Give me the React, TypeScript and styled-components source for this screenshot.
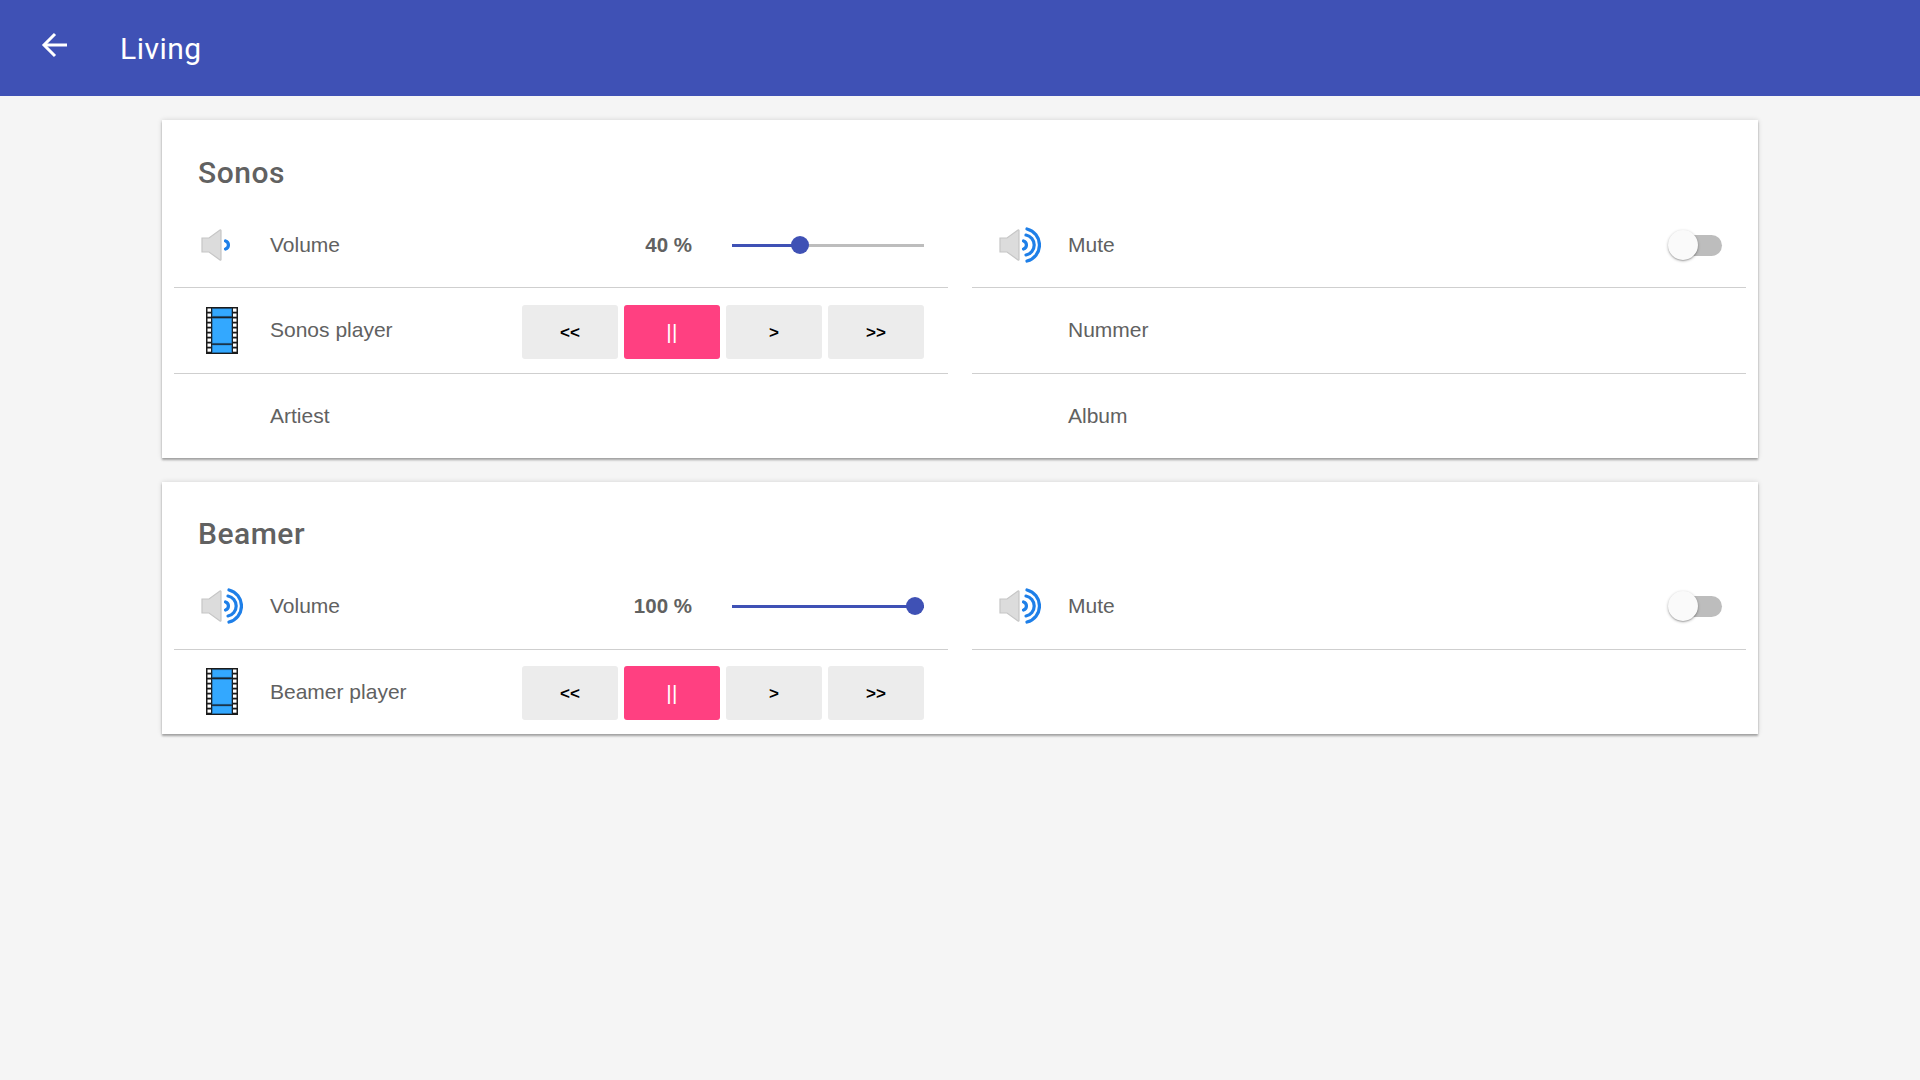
import styled, { createGlobalStyle } from "styled-components";

const GlobalStyle = createGlobalStyle`
  html, body {
    margin: 0;
    padding: 0;
    background: #f5f5f5;
    font-family: "Liberation Sans", Arial, sans-serif;
  }
`;

const Page = styled.div`
  min-height: 1080px;
  background: #f5f5f5;
`;

const Header = styled.header`
  display: flex;
  align-items: center;
  height: 96px;
  padding-left: 41px;
  background: #3f51b5;
  color: #fff;
`;

const BackIcon = styled.svg`
  width: 27px;
  height: 26px;
  margin: -6px 52px 0 0;
`;

const HeaderTitle = styled.h1`
  margin: 0;
  font-family: Roboto, sans-serif;
  font-size: 30px;
  font-weight: 400;
  letter-spacing: 0.5px;
`;

const Main = styled.main`
  display: flex;
  flex-direction: column;
  gap: 23.5px;
  padding: 24px 162px;
`;

const Card = styled.section`
  background: #fff;
  box-shadow: 0 2px 2px rgba(0, 0, 0, 0.3), 0 0 5px rgba(0, 0, 0, 0.14);
`;

const CardTitle = styled.h2<{ $lift?: boolean }>`
  height: 82px;
  margin: 0;
  padding: ${(p) => (p.$lift ? "35px" : "36px")} 0 0 36px;
  box-sizing: border-box;
  font-family: Roboto, sans-serif;
  font-size: 30px;
  line-height: 34px;
  font-weight: 500;
  letter-spacing: 0.5px;
  color: #616161;
`;

const Grid = styled.div`
  display: grid;
  grid-template-columns: 1fr 1fr;
  column-gap: 24px;
  padding: 0 12px;
`;

const Row = styled.div<{ $last?: boolean }>`
  display: flex;
  align-items: center;
  height: ${(p) => (p.$last ? "84px" : "85px")};
  padding-right: 24px;
  border-bottom: ${(p) => (p.$last ? "none" : "1px solid #cfcfcf")};
  font-size: 21px;
  color: #616161;
`;

const IconCell = styled.div`
  display: flex;
  justify-content: center;
  align-items: center;
  flex: 0 0 96px;
`;

const Label = styled.div<{ $drop?: boolean; $lift?: boolean }>`
  flex: 1;
  padding-top: ${(p) => (p.$drop ? "1px" : "0")};
  padding-bottom: ${(p) => (p.$lift ? "1px" : "0")};
`;

const Value = styled.div<{ $drop?: boolean }>`
  margin-right: 40px;
  padding-top: ${(p) => (p.$drop ? "1px" : "0")};
  font-size: 20.5px;
  font-weight: 700;
`;

const SliderTrack = styled.div`
  position: relative;
  width: 192px;
  height: 3px;
  margin-top: 1px;
  background: #bdbdbd;
`;

const SliderFill = styled.div`
  height: 100%;
  background: #3f51b5;
`;

const SliderThumb = styled.div`
  position: absolute;
  top: -8px;
  width: 18px;
  height: 18px;
  border-radius: 50%;
  background: #3f51b5;
`;

const ToggleTrack = styled.div`
  position: relative;
  width: 48px;
  height: 21px;
  margin-top: 1px;
  border-radius: 11px;
  background: #bdbdbd;
`;

const ToggleThumb = styled.div`
  position: absolute;
  top: -5px;
  left: -6px;
  width: 30px;
  height: 30px;
  border-radius: 50%;
  background: #fafafa;
  box-shadow: 0 1px 3px rgba(0, 0, 0, 0.3), 0 1px 1px rgba(0, 0, 0, 0.14);
`;

const ButtonGroup = styled.div`
  display: flex;
  gap: 6px;
  margin-top: 2px;
`;

const PlayerButton = styled.button<{ $active?: boolean }>`
  width: 96px;
  height: 54px;
  padding: 3px 0 0;
  border: 0;
  border-radius: 3px;
  background: ${(p) => (p.$active ? "#ff4081" : "#ececec")};
  color: ${(p) => (p.$active ? "#fff" : "#000")};
  font-family: "Liberation Sans", Arial, sans-serif;
  font-size: 17px;
  font-weight: 700;
`;

const PauseBars = styled.span`
  display: block;
  margin-top: -3px;
  font-size: 21px;
  font-weight: 400;
  letter-spacing: 0.4px;
`;

const SpeakerIcon = ({ level }: { level: "low" | "full" }) => (
  <svg width="42" height="36" viewBox="0 0 42 36" fill="none">
    <path
      d="M1 11H8L19 3C19.6 2.6 20 3 20 3.6V32.4C20 33 19.6 33.4 19 33L8 25H1Z"
      fill="#dcdcdc"
      stroke="#c6c6c6"
      strokeWidth="1.2"
    />
    <g stroke="#1e7fe8" strokeWidth="3.2" strokeLinecap="round">
      <path d="M24.5 14A4.2 4.2 0 0 1 24.5 22" />
      {level === "full" && (
        <>
          <path d="M27 8A10.2 10.2 0 0 1 27 28" />
          <path d="M28 2A16.5 16.5 0 0 1 28 34" />
        </>
      )}
    </g>
  </svg>
);

const sprockets = [0, 1, 2, 3, 4, 5, 6, 7, 8];

const FilmIcon = () => (
  <svg width="32" height="47" viewBox="0 0 32 47">
    <rect x="0" y="0" width="32" height="47" fill="#1a1a1a" />
    {sprockets.map((i) => (
      <g key={i} fill="#fff">
        <rect x="1.5" y={1.5 + i * 5} width="3.5" height="3.2" />
        <rect x="27" y={1.5 + i * 5} width="3.5" height="3.2" />
      </g>
    ))}
    <g fill="#33a8ff" stroke="#1f6fb0" strokeWidth="0.6">
      <rect x="6.2" y="1.8" width="19.6" height="7.4" />
      <rect x="6.2" y="11.2" width="19.6" height="25" />
      <rect x="6.2" y="38" width="19.6" height="7.6" />
    </g>
  </svg>
);

// position is where the thumb sits on the track, in percent
const Slider = ({ position }: { position: number }) => (
  <SliderTrack>
    <SliderFill style={{ width: `${position}%` }} />
    <SliderThumb style={{ left: `${(192 - 18) * (position / 100)}px` }} />
  </SliderTrack>
);

const Toggle = () => (
  <ToggleTrack>
    <ToggleThumb />
  </ToggleTrack>
);

const Player = () => (
  <ButtonGroup>
    <PlayerButton>&lt;&lt;</PlayerButton>
    <PlayerButton $active>
      <PauseBars>||</PauseBars>
    </PlayerButton>
    <PlayerButton>&gt;</PlayerButton>
    <PlayerButton>&gt;&gt;</PlayerButton>
  </ButtonGroup>
);

export default function App() {
  return (
    <Page>
      <GlobalStyle />
      <Header>
        <BackIcon viewBox="0 0 27 26" fill="none" stroke="#fff" strokeWidth="3">
          <path d="M26 13H3" />
          <path d="M14 2L3 13L14 24" />
        </BackIcon>
        <HeaderTitle>Living</HeaderTitle>
      </Header>
      <Main>
        <Card>
          <CardTitle>Sonos</CardTitle>
          <Grid>
            <Row>
              <IconCell>
                <SpeakerIcon level="low" />
              </IconCell>
              <Label $drop>Volume</Label>
              <Value $drop>40 %</Value>
              <Slider position={34} />
            </Row>
            <Row>
              <IconCell>
                <SpeakerIcon level="full" />
              </IconCell>
              <Label $drop>Mute</Label>
              <Toggle />
            </Row>
            <Row>
              <IconCell>
                <FilmIcon />
              </IconCell>
              <Label $lift>Sonos player</Label>
              <Player />
            </Row>
            <Row>
              <IconCell />
              <Label $lift>Nummer</Label>
            </Row>
            <Row $last>
              <IconCell />
              <Label>Artiest</Label>
            </Row>
            <Row $last>
              <IconCell />
              <Label>Album</Label>
            </Row>
          </Grid>
        </Card>
        <Card>
          <CardTitle $lift>Beamer</CardTitle>
          <Grid>
            <Row>
              <IconCell>
                <SpeakerIcon level="full" />
              </IconCell>
              <Label>Volume</Label>
              <Value>100 %</Value>
              <Slider position={100} />
            </Row>
            <Row>
              <IconCell>
                <SpeakerIcon level="full" />
              </IconCell>
              <Label>Mute</Label>
              <Toggle />
            </Row>
            <Row $last>
              <IconCell>
                <FilmIcon />
              </IconCell>
              <Label>Beamer player</Label>
              <Player />
            </Row>
          </Grid>
        </Card>
      </Main>
    </Page>
  );
}
